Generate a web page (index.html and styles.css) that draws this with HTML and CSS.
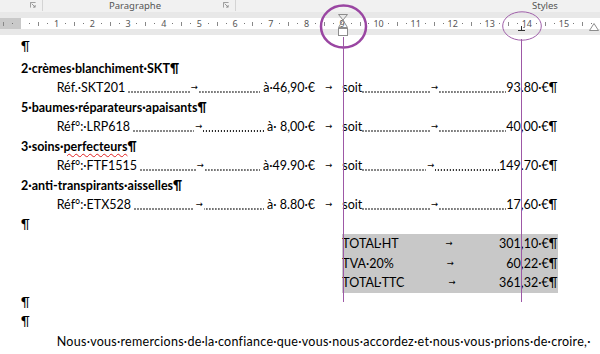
FILE: index.html
```html
<!DOCTYPE html>
<html lang="fr">
<head>
    <meta charset="UTF-8">
    <title>Facture - règles de tabulation</title>
    <link rel="stylesheet" href="styles.css">
</head>
<body>
    <div class="ribbon">
        <div class="grp grp-first">
            <svg class="launch" viewBox="0 0 7 7"><path d="M0.5 6.5V0.5H6.5M2 2L6 6M6 3.5V6H3.5"/></svg>
        </div>
        <div class="grp grp-para">
            <span class="label">Paragraphe</span>
            <svg class="launch" viewBox="0 0 7 7"><path d="M0.5 6.5V0.5H6.5M2 2L6 6M6 3.5V6H3.5"/></svg>
        </div>
        <div class="grp grp-styles">
            <span class="label">Styles</span>
        </div>
    </div>

    <div class="rulerbar">
        <div class="ruler">
            <div class="marks">
                <b class="k"></b><b class="d"></b><b></b>
                <b class="d"></b><b class="k"></b><b class="d"></b><b>1</b>
                <b class="d"></b><b class="k"></b><b class="d"></b><b>2</b>
                <b class="d"></b><b class="k"></b><b class="d"></b><b>3</b>
                <b class="d"></b><b class="k"></b><b class="d"></b><b>4</b>
                <b class="d"></b><b class="k"></b><b class="d"></b><b>5</b>
                <b class="d"></b><b class="k"></b><b class="d"></b><b>6</b>
                <b class="d"></b><b class="k"></b><b class="d"></b><b>7</b>
                <b class="d"></b><b class="k"></b><b class="d"></b><b>8</b>
                <b class="d"></b><b class="k"></b><b class="d"></b><b>9</b>
                <b class="d"></b><b class="k"></b><b class="d"></b><b>10</b>
                <b class="d"></b><b class="k"></b><b class="d"></b><b>11</b>
                <b class="d"></b><b class="k"></b><b class="d"></b><b>12</b>
                <b class="d"></b><b class="k"></b><b class="d"></b><b>13</b>
                <b class="d"></b><b class="k"></b><b class="d"></b><b>14</b>
                <b class="d"></b><b class="k"></b><b class="d"></b><b>15</b>
                <b class="d"></b><b class="k"></b><b class="d"></b><b></b>
            </div>
            <!-- retrait du paragraphe à 9 cm -->
            <svg class="indent" viewBox="0 0 10 23">
                <path class="tri" d="M0.5 0.5H9.5L5 6ZM5 6L9.5 13.5H0.5Z"/>
                <rect x="0.5" y="14.5" width="9" height="7"/>
            </svg>
            <!-- tabulation décimale à 14 cm -->
            <svg class="dectab" viewBox="0 0 8 6">
                <path d="M0 4.5H7M3.5 0V4.5"/>
                <rect x="5.5" y="1" width="1" height="1"/>
            </svg>
            <svg class="rindent" viewBox="0 0 10 8">
                <path d="M0.5 7.5L5 0.5L9.5 7.5Z"/>
            </svg>
        </div>
    </div>

    <div class="page">
        <p class="first">¶</p>

        <p class="head">2·crèmes·blanchiment·SKT¶</p>
        <div class="item">
            <div class="lhs">
                <span>Réf.·SKT201</span>
                <span class="tab"><span class="dots"></span><span class="arr">→</span><span class="dots"></span></span>
                <span class="price"><span>à·</span><span>46,90·€</span></span>
                <span class="gap"><span class="arr">→</span></span>
            </div>
            <div class="rhs">
                <div class="amt">
                    <span>soit</span>
                    <span class="tab"><span class="dots"></span><span class="arr">→</span><span class="dots"></span></span>
                    <span>93</span>
                </div>
                <span>.80·€¶</span>
            </div>
        </div>

        <p class="head">5·baumes·réparateurs·apaisants¶</p>
        <div class="item">
            <div class="lhs">
                <span>Réf°:·LRP618</span>
                <span class="tab"><span class="dots"></span><span class="arr">→</span><span class="dots"></span></span>
                <span class="price"><span>à·</span><span>8,00·€</span></span>
                <span class="gap"><span class="arr">→</span></span>
            </div>
            <div class="rhs">
                <div class="amt">
                    <span>soit</span>
                    <span class="tab"><span class="dots"></span><span class="arr">→</span><span class="dots"></span></span>
                    <span>40</span>
                </div>
                <span>,00·€¶</span>
            </div>
        </div>

        <p class="head">3·soins·<span class="spell">perfecteurs</span>¶</p>
        <div class="item">
            <div class="lhs">
                <span>Réf°:·FTF1515</span>
                <span class="tab"><span class="dots"></span><span class="arr">→</span><span class="dots"></span></span>
                <span class="price"><span>à·</span><span>49.90·€</span></span>
                <span class="gap"><span class="arr">→</span></span>
            </div>
            <div class="rhs">
                <div class="amt">
                    <span>soit</span>
                    <span class="tab"><span class="dots"></span><span class="arr">→</span><span class="dots"></span></span>
                    <span>149</span>
                </div>
                <span>.70·€¶</span>
            </div>
        </div>

        <p class="head">2·anti-transpirants·aisselles¶</p>
        <div class="item">
            <div class="lhs">
                <span>Réf°:·ETX528</span>
                <span class="tab"><span class="dots"></span><span class="arr">→</span><span class="dots"></span></span>
                <span class="price"><span>à·</span><span>8.80·€</span></span>
                <span class="gap"><span class="arr">→</span></span>
            </div>
            <div class="rhs">
                <div class="amt">
                    <span>soit</span>
                    <span class="tab"><span class="dots"></span><span class="arr">→</span><span class="dots"></span></span>
                    <span>17</span>
                </div>
                <span>,60·€¶</span>
            </div>
        </div>

        <p>¶</p>

        <div class="totals">
            <div class="trow">
                <div class="amt"><span>TOTAL·HT</span><span class="tab"><span class="arr">→</span></span><span>301</span></div>
                <span>,10·€¶</span>
            </div>
            <div class="trow">
                <div class="amt"><span>TVA·20%</span><span class="tab"><span class="arr">→</span></span><span>60</span></div>
                <span>,22·€¶</span>
            </div>
            <div class="trow">
                <div class="amt"><span>TOTAL·TTC</span><span class="tab"><span class="arr">→</span></span><span>361</span></div>
                <span>,32·€¶</span>
            </div>
        </div>

        <p>¶</p>
        <p>¶</p>
        <p class="closing">Nous·vous·remercions·de·la·confiance·que·vous·nous·accordez·et·nous·vous·prions·de·croire,·</p>
    </div>

    <!-- annotations : cercles et repères des tabulations -->
    <svg class="notes" viewBox="0 0 600 354">
        <ellipse class="ring-big" cx="343.5" cy="26.5" rx="22.5" ry="21"/>
        <ellipse class="ring-small" cx="522" cy="26" rx="19.3" ry="14.2"/>
        <path class="guide" d="M343.5 37V302M521.5 39V302"/>
    </svg>
</body>
</html>
```

FILE: styles.css
```css
body {
    margin: 0;
    width: 600px;
    height: 354px;
    overflow: hidden;
    position: relative;
    background: #fff;
    color: #000;
    font-family: Lato, "Noto Sans", sans-serif;
}

/* ruban */
.ribbon {
    height: 12px;
    background: #f1f1f1;
    display: flex;
    font-family: "Noto Sans", "Open Sans", sans-serif;
    font-size: 9.5px;
    color: #555;
}
.grp {
    display: flex;
    align-items: flex-start;
    height: 11px;
}
.grp-first {
    width: 42px;
    border-right: 1px solid #d4d4d4;
    justify-content: flex-end;
}
.grp-para {
    width: 192px;
    border-right: 1px solid #d4d4d4;
}
.grp-para .label {
    flex: 1;
    text-align: center;
    padding-left: 4px;
}
.grp-styles {
    margin-left: auto;
    width: 110px;
    justify-content: center;
}
.label {
    line-height: 11px;
}
.launch {
    width: 6px;
    height: 6px;
    margin: 2px 6px 0 0;
    fill: none;
    stroke: #8a8a8a;
    stroke-width: 1;
}

/* règle */
.rulerbar {
    height: 23px;
    background: #e8e8e8;
    padding-top: 6px;
    box-sizing: border-box;
}
.ruler {
    position: relative;
    height: 11px;
    background: linear-gradient(to right, #c9c9c9 21px, #fff 21px);
}
.marks {
    display: flex;
    height: 11px;
    margin-left: -1.3px;
    font-family: "Noto Sans", "Open Sans", sans-serif;
    font-size: 9px;
    color: #555;
}
.marks b {
    flex: 0 0 8.925px;
    display: flex;
    justify-content: center;
    align-items: center;
    font-weight: normal;
    line-height: 11px;
}
.marks .d::before {
    content: "";
    width: 1px;
    height: 1px;
    background: #777;
}
.marks .k::before {
    content: "";
    width: 1px;
    height: 4px;
    background: #888;
}
.indent {
    position: absolute;
    left: 338px;
    top: -4px;
    width: 10px;
    height: 23px;
    stroke: #8c8c8c;
    stroke-width: 1;
}
.indent .tri {
    fill: none;
}
.indent rect {
    fill: #fff;
}
.dectab {
    position: absolute;
    left: 518px;
    top: 8px;
    width: 8px;
    height: 6px;
    stroke: #333;
    stroke-width: 1;
    fill: #333;
}
.dectab rect {
    stroke: none;
}
.rindent {
    position: absolute;
    left: 589px;
    top: 5px;
    width: 10px;
    height: 8px;
    fill: #fff;
    stroke: #8c8c8c;
    stroke-width: 1;
}

/* document */
.page {
    padding: 2px 7px 0 21px;
    font-size: 12.5px;
    line-height: 19.5px;
}
.page p {
    margin: 0;
    white-space: nowrap;
}
.page .first {
    margin-bottom: 2px;
}
.head {
    font-weight: bold;
}
.spell {
    text-decoration: underline wavy #e02020;
    text-decoration-thickness: 1px;
    text-underline-offset: 2px;
}
.item {
    display: flex;
    margin-left: 35.7px;
    white-space: nowrap;
}
.lhs {
    flex: 0 0 285.6px;
    min-width: 0;
    display: flex;
}
.rhs {
    display: flex;
    min-width: 0;
}
.amt {
    flex: 0 0 178.5px;
    min-width: 0;
    display: flex;
}
.tab {
    flex: 1;
    min-width: 0;
    display: flex;
    justify-content: center;
}
.lhs > .tab {
    margin: 0 3px;
}
/* points de suite */
.dots {
    flex: 1;
    min-width: 0;
    background-image: linear-gradient(to right, #111 1.5px, transparent 1.5px);
    background-size: 3px 1.5px;
    background-repeat: repeat-x;
    background-position: left 0.5px top 13px;
}
.dots:last-child {
    background-position: right 1px top 13px;
}
.arr {
    font-family: "DejaVu Sans", sans-serif;
    font-size: 8.5px;
    padding: 0 1px;
}
.price {
    flex: 0 0 48px;
    display: flex;
    justify-content: space-between;
}
.gap {
    flex: 0 0 27.3px;
    display: flex;
    justify-content: center;
}
.totals {
    margin-left: 321.3px;
    width: 215.7px;
    background: #c8c8c8;
    white-space: nowrap;
}
.trow {
    display: flex;
}
.page .closing {
    margin-left: 35.7px;
    letter-spacing: 0.28px;
}

/* annotations */
.notes {
    position: absolute;
    left: 0;
    top: 0;
    width: 600px;
    height: 354px;
    pointer-events: none;
    fill: none;
}
.ring-big {
    stroke: #9a46a2;
    stroke-width: 2.5;
}
.ring-small {
    stroke: #a060aa;
    stroke-width: 1;
}
.guide {
    stroke: #9d58a6;
    stroke-width: 1;
}
```
